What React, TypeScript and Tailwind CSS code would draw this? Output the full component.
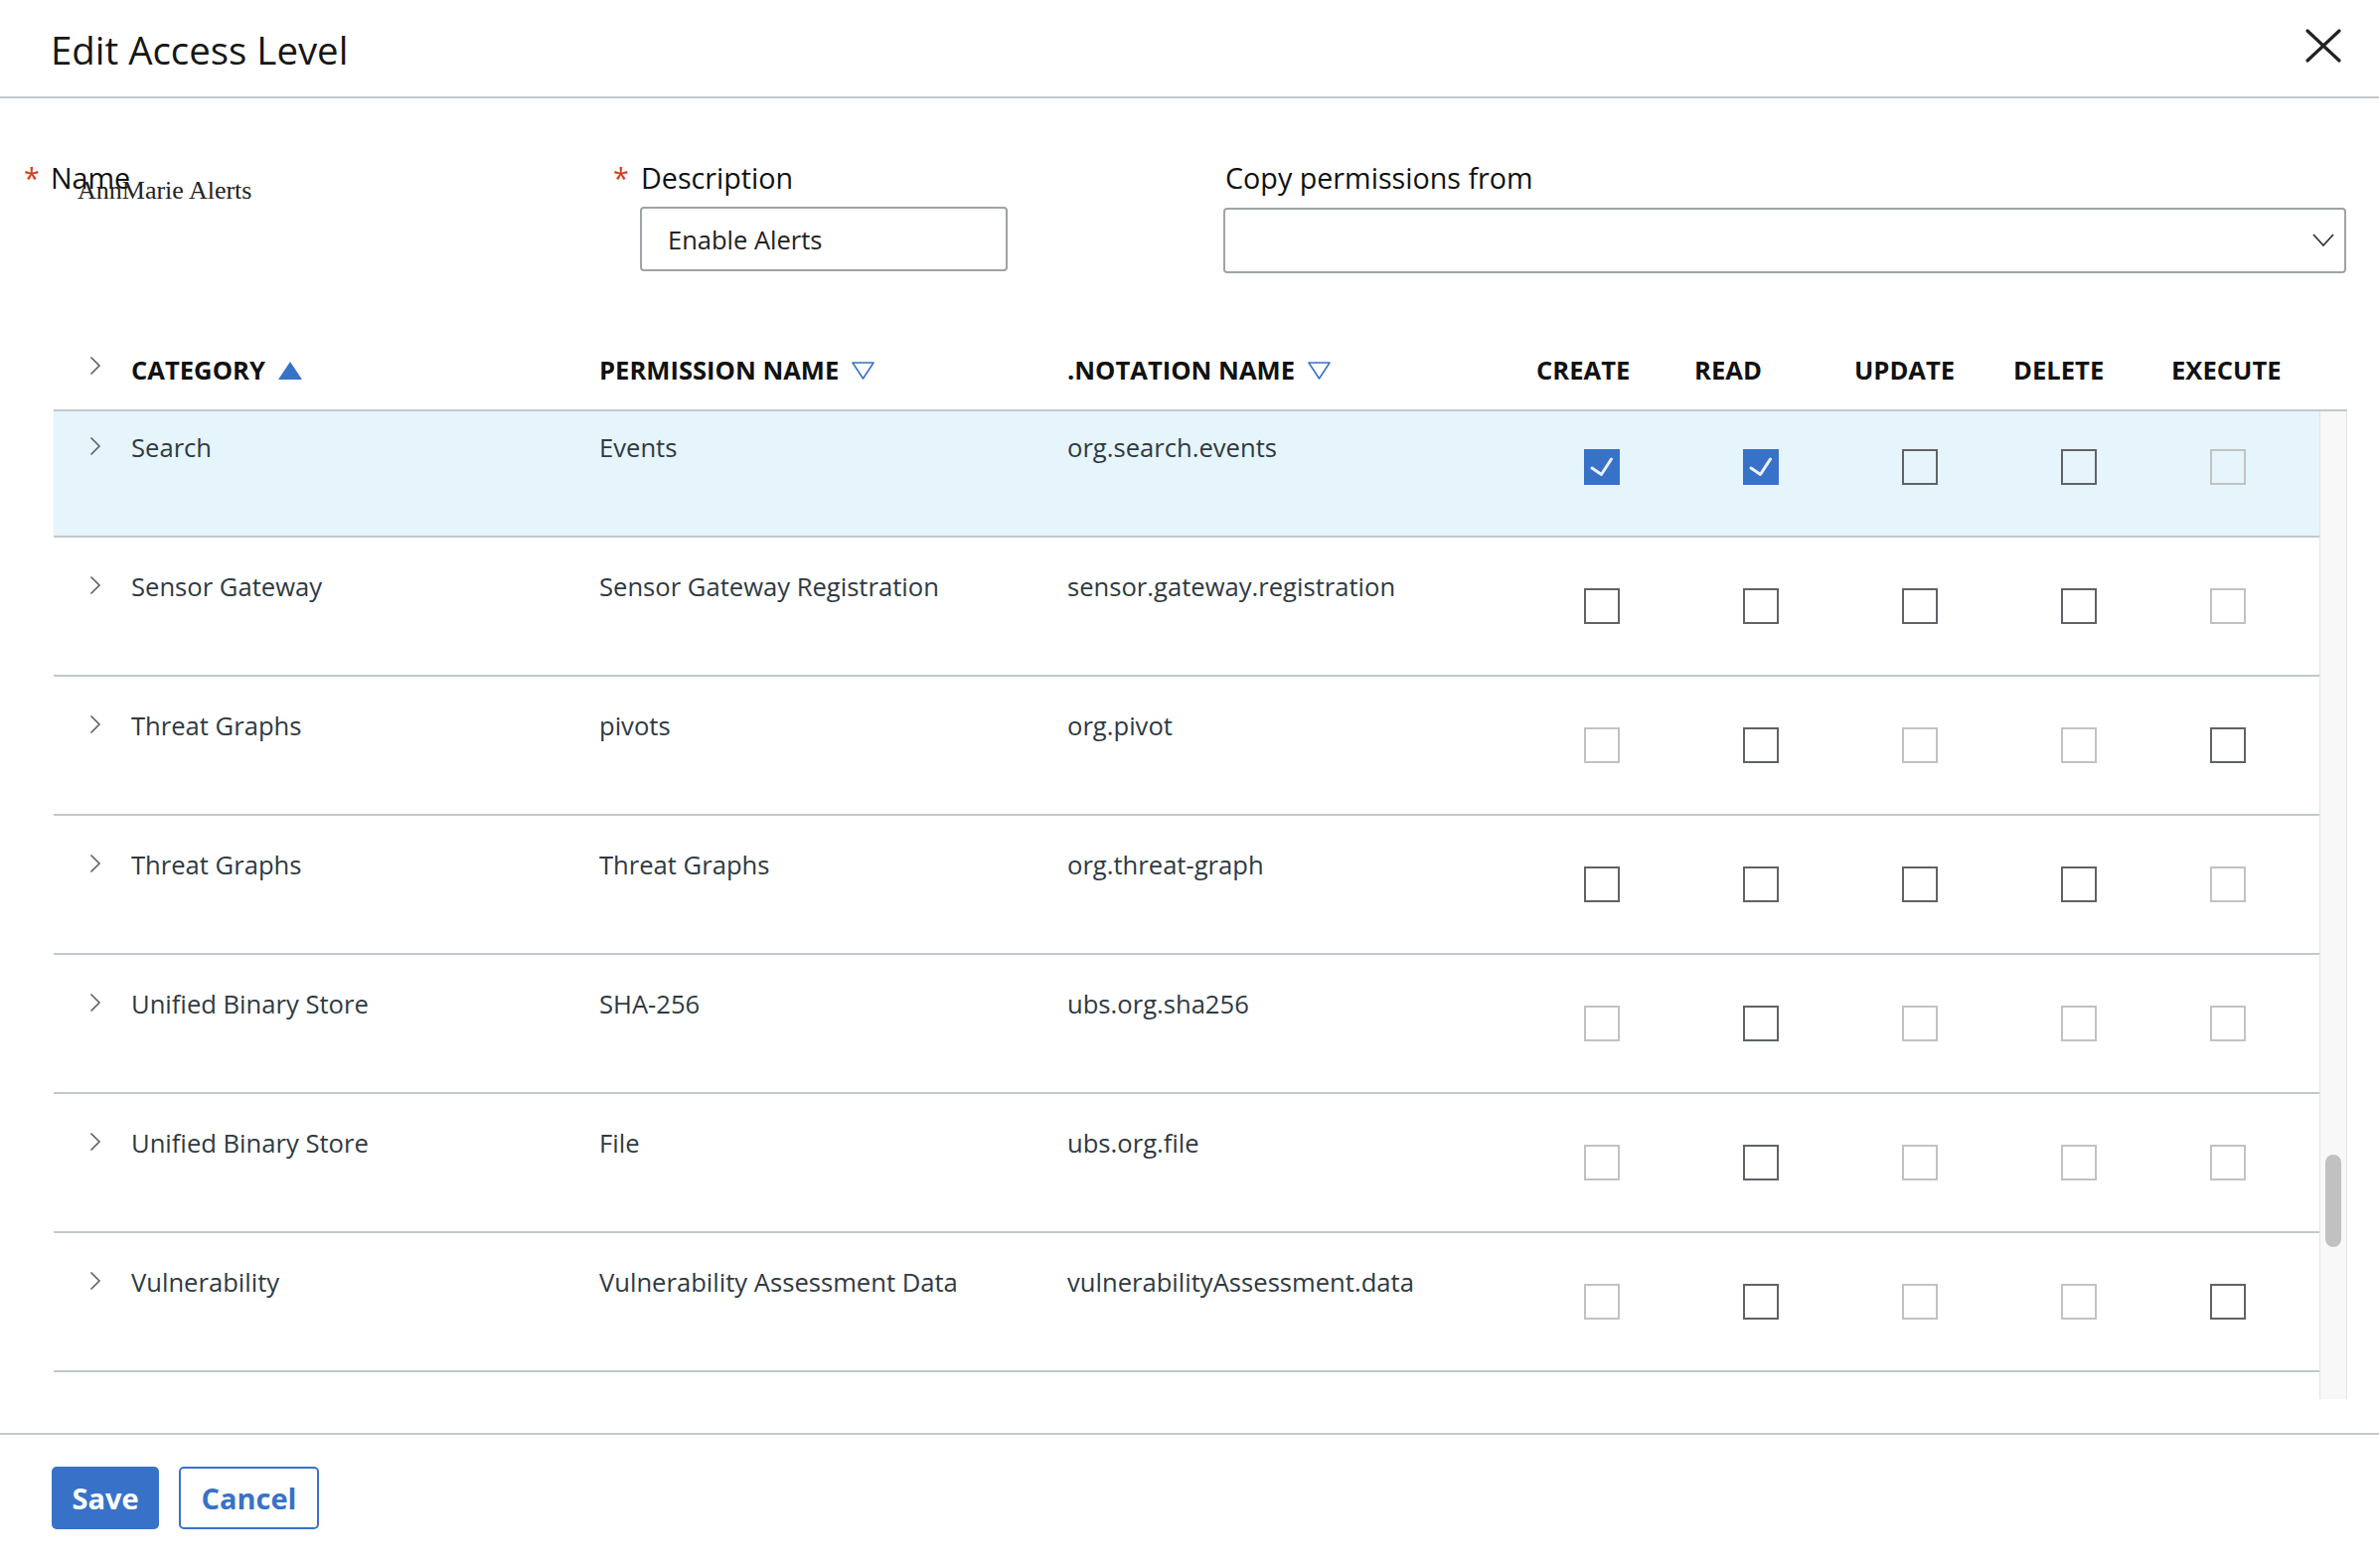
import React from "react";

type BoxState = "c" | "e" | "d";

const rows: { cat: string; perm: string; note: string; boxes: BoxState[] }[] = [
  { cat: "Search", perm: "Events", note: "org.search.events", boxes: ["c", "c", "e", "e", "d"] },
  { cat: "Sensor Gateway", perm: "Sensor Gateway Registration", note: "sensor.gateway.registration", boxes: ["e", "e", "e", "e", "d"] },
  { cat: "Threat Graphs", perm: "pivots", note: "org.pivot", boxes: ["d", "e", "d", "d", "e"] },
  { cat: "Threat Graphs", perm: "Threat Graphs", note: "org.threat-graph", boxes: ["e", "e", "e", "e", "d"] },
  { cat: "Unified Binary Store", perm: "SHA-256", note: "ubs.org.sha256", boxes: ["d", "e", "d", "d", "d"] },
  { cat: "Unified Binary Store", perm: "File", note: "ubs.org.file", boxes: ["d", "e", "d", "d", "d"] },
  { cat: "Vulnerability", perm: "Vulnerability Assessment Data", note: "vulnerabilityAssessment.data", boxes: ["d", "e", "d", "d", "e"] },
];

const boxMl = ["ml-[48px]", "ml-[49px]", "ml-[48px]", "ml-[48px]", "ml-[39px]"];

function Box({ s }: { s: BoxState }) {
  if (s === "c") {
    return (
      <div className="w-[36px] h-[36px] bg-[#3872c8]">
        <svg width="36" height="36" viewBox="0 0 36 36">
          <path d="M8 19 L17.5 25.5 L27.5 10" fill="none" stroke="#eaf2fb" strokeWidth="3" strokeLinecap="round" strokeLinejoin="round" />
        </svg>
      </div>
    );
  }
  if (s === "e") return <div className="w-[36px] h-[36px] border-2 border-[#5f6368]" />;
  return <div className="w-[36px] h-[36px] border-2 border-[#c2c2c2]" />;
}

function Chevron({ cls }: { cls: string }) {
  return (
    <svg className={cls} width="12" height="20" viewBox="0 0 12 20">
      <path d="M1.5 1.5 L10 10 L1.5 18.5" fill="none" stroke="#5c6166" strokeWidth="1.6" />
    </svg>
  );
}

const gridCols = "grid grid-cols-[78px_471px_471px_472px_159px_161px_160px_159px_149px]";

export default function App() {
  return (
    <div className="w-[2394px] h-[1578px] bg-white overflow-hidden flex flex-col font-['Open_Sans',sans-serif]">
      {/* Header */}
      <div className="h-[99px] shrink-0 border-b-2 border-[#c0c9cd] flex justify-between items-start pl-[51px] pr-[38px]">
        <div className="pt-[24px] text-[38.4px] leading-[52px] text-[#161616]">Edit Access Level</div>
        <svg className="mt-[29px]" width="36" height="34" viewBox="0 0 36 34">
          <path d="M2 2 L34 32 M34 2 L2 32" stroke="#222" strokeWidth="3.2" strokeLinecap="round" />
        </svg>
      </div>

      {/* Form */}
      <div className="grid grid-cols-[594px_588px_1130px] items-start pl-[51px] pt-[61px]">
        <div>
          <div className="flex -ml-[27px] text-[28.7px] leading-[38px] text-[#111]">
            <span className="w-[27px] text-[#d43b1e]">*</span>
            <span>Name</span>
          </div>
          <div className="-mt-[20px] ml-[27px] font-['Liberation_Serif',serif] text-[26px] leading-[28px] text-[#222]">AnnMarie Alerts</div>
        </div>
        <div>
          <div className="flex -ml-[28px] text-[28.7px] leading-[38px] text-[#111]">
            <span className="w-[28px] text-[#d43b1e]">*</span>
            <span>Description</span>
          </div>
          <div className="mt-[10px] -ml-[1px] w-[370px] h-[65px] border-2 border-[#9ea3a7] rounded-[4px] flex items-center pl-[26px] pt-[2px] text-[25.5px] text-[#222]">
            Enable Alerts
          </div>
        </div>
        <div>
          <div className="text-[28.7px] leading-[38px] text-[#111]">Copy permissions from</div>
          <div className="mt-[11px] -ml-[2px] w-[1130px] h-[66px] border-2 border-[#9ea3a7] rounded-[4px] flex items-center justify-end pr-[9px]">
            <svg width="24" height="16" viewBox="0 0 24 16">
              <path d="M2 2 L12 13 L22 2" fill="none" stroke="#333" strokeWidth="1.8" />
            </svg>
          </div>
        </div>
      </div>

      {/* Table */}
      <div className="ml-[54px] mt-[25px] w-[2308px]">
        <div className="border-b-2 border-[#c0c9cd] pt-[55px] pb-[21px]">
          <div className={`${gridCols} w-[2280px] items-start text-[25.6px] leading-[36px] font-bold text-[#111]`}>
            <div>
              <Chevron cls="ml-[36px] mt-[3px]" />
            </div>
            <div className="flex items-center">
              <span>CATEGORY</span>
              <svg className="ml-[13px]" width="24" height="18" viewBox="0 0 24 18">
                <polygon points="0,18 12,0 24,18" fill="#3872c8" />
              </svg>
            </div>
            <div className="flex items-center">
              <span>PERMISSION NAME</span>
              <svg className="ml-[13px]" width="23" height="18" viewBox="0 0 23 18">
                <polygon points="1,1 22,1 11.5,17" fill="none" stroke="#3872c8" strokeWidth="1.6" strokeLinejoin="round" />
              </svg>
            </div>
            <div className="flex items-center">
              <span>.NOTATION NAME</span>
              <svg className="ml-[13px]" width="23" height="18" viewBox="0 0 23 18">
                <polygon points="1,1 22,1 11.5,17" fill="none" stroke="#3872c8" strokeWidth="1.6" strokeLinejoin="round" />
              </svg>
            </div>
            <div>CREATE</div>
            <div>READ</div>
            <div>UPDATE</div>
            <div>DELETE</div>
            <div>EXECUTE</div>
          </div>
        </div>

        <div className="flex h-[994px]">
          <div className="w-[2280px] overflow-hidden">
            {rows.map((r, i) => (
              <div
                key={i}
                className={
                  i === 0
                    ? `${gridCols} items-start h-[127px] pt-[19px] border-b-2 border-[#c0c9cd] bg-[#e6f4fb] text-[25.6px] leading-[36px] text-[#2f3a43]`
                    : `${gridCols} items-start h-[140px] pt-[32px] border-b-2 border-[#c0c9cd] text-[25.6px] leading-[36px] text-[#2f3a43]`
                }
              >
                <div>
                  <Chevron cls="ml-[36px] mt-[6px]" />
                </div>
                <div>{r.cat}</div>
                <div>{r.perm}</div>
                <div>{r.note}</div>
                {r.boxes.map((b, j) => (
                  <div key={j} className={`mt-[19px] ${boxMl[j]}`}>
                    <Box s={b} />
                  </div>
                ))}
              </div>
            ))}
          </div>
          <div className="w-[28px] bg-[#f8f8f8] border-x border-[#e4e4e4] pt-[748px] pl-[5px]">
            <div className="w-[16px] h-[93px] rounded-full bg-[#c1c1c1]" />
          </div>
        </div>
      </div>

      {/* Footer */}
      <div className="mt-[34px] border-t-2 border-[#c0c9cd] pt-[32px] pl-[52px] flex gap-[20px]">
        <div className="w-[108px] h-[63px] rounded-[5px] bg-[#3872c8] text-white font-bold text-[29px] flex items-center justify-center">
          Save
        </div>
        <div className="w-[141px] h-[63px] rounded-[5px] border-2 border-[#3872c8] text-[#3872c8] font-bold text-[29px] flex items-center justify-center">
          Cancel
        </div>
      </div>
    </div>
  );
}
